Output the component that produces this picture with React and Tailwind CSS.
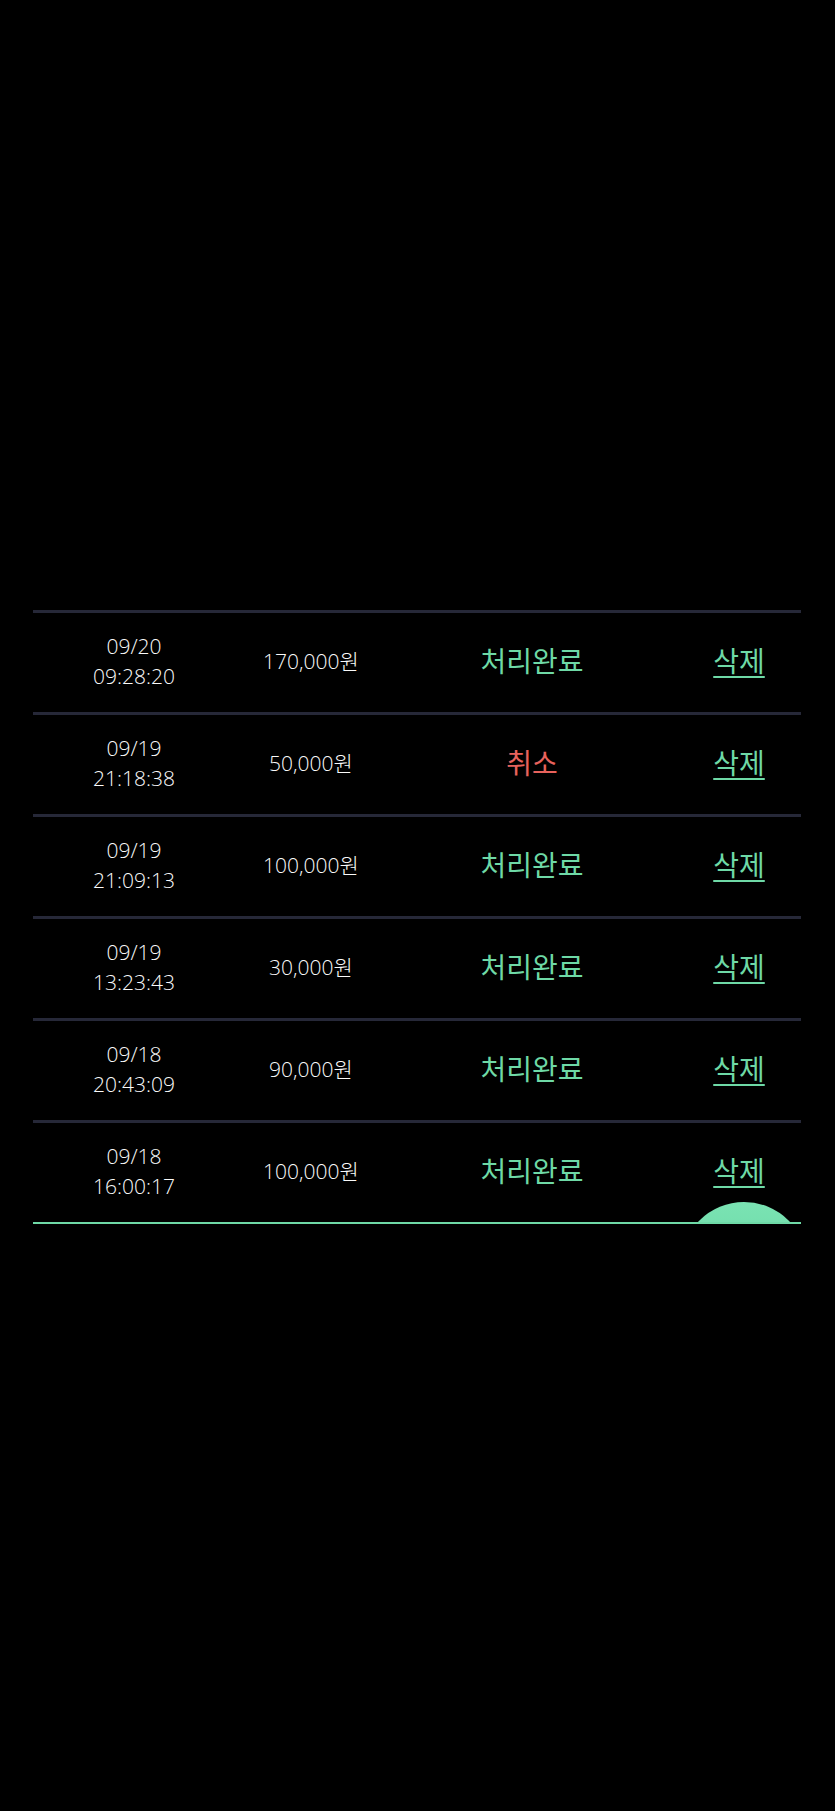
const rows = [
  { date: '09/20', time: '09:28:20', amount: '170,000원', status: '처리완료' },
  { date: '09/19', time: '21:18:38', amount: '50,000원', status: '취소' },
  { date: '09/19', time: '21:09:13', amount: '100,000원', status: '처리완료' },
  { date: '09/19', time: '13:23:43', amount: '30,000원', status: '처리완료' },
  { date: '09/18', time: '20:43:09', amount: '90,000원', status: '처리완료' },
  { date: '09/18', time: '16:00:17', amount: '100,000원', status: '처리완료' },
];

const latin = { fontFamily: '"Open Sans", "Noto Sans CJK KR", sans-serif' };

export default function App() {
  return (
    <div
      className="min-h-[1811px] bg-black pt-[610px]"
      style={{ fontFamily: '"Noto Sans CJK KR", "Noto Sans", sans-serif' }}
    >
      <div className="relative mx-[33px] w-[768px] border-b-2 border-[#6ed9a6]">
        {rows.map((row, i) => (
          <div
            key={i}
            className="grid h-[102px] grid-cols-[202px_152px_290px_124px] items-center border-t-[3px] border-[#262838]"
          >
            <div
              className="pb-[4px] text-center text-[21px] font-light leading-[30px] text-[#fafafa]"
              style={latin}
            >
              <div>{row.date}</div>
              <div>{row.time}</div>
            </div>
            <div className="pb-[2px] text-center text-[21px] font-light text-[#fafafa]" style={latin}>
              {row.amount}
            </div>
            <div
              className={
                row.status === '취소'
                  ? 'pb-[6px] text-center text-[28px] text-[#e8625c]'
                  : 'pb-[6px] text-center text-[28px] text-[#6ed9a6]'
              }
            >
              {row.status}
            </div>
            <div className="pb-[6px] text-center text-[28px] text-[#6ed9a6] underline underline-offset-4">
              삭제
            </div>
          </div>
        ))}
        <div className="pointer-events-none absolute bottom-0 left-[648px] h-[20px] w-[126px] overflow-hidden">
          <div className="h-[126px] w-[126px] rounded-full bg-gradient-to-b from-[#7ae3b3] to-[#5fd09c]" />
        </div>
      </div>
    </div>
  );
}
